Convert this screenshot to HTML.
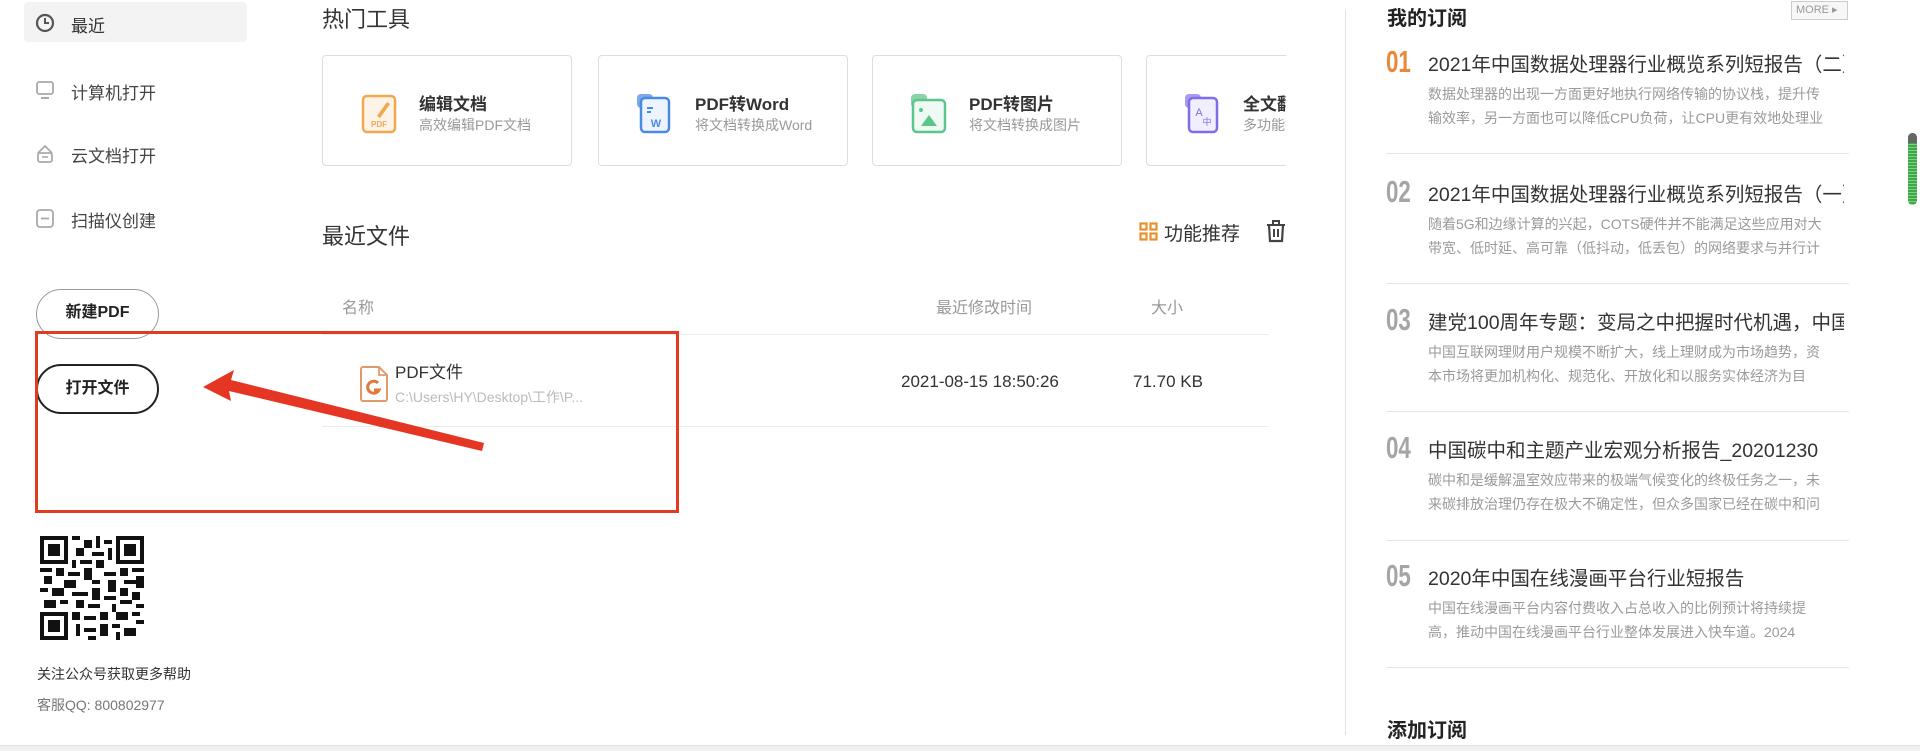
<!DOCTYPE html>
<html><head><meta charset="utf-8"><style>
*{margin:0;padding:0;box-sizing:border-box}
body{width:1920px;height:751px;background:#fff;position:relative;overflow:hidden;font-family:"Liberation Sans","Noto Sans CJK SC",sans-serif;color:#333}
.a{position:absolute;white-space:nowrap}
.nav{font-size:17px;color:#444}
.card{position:absolute;top:55px;width:250px;height:111px;border:1px solid #dedede;border-radius:4px;background:#fff}
.ct{position:absolute;left:96px;top:34px;font-size:17px;font-weight:bold;color:#333}
.cs{position:absolute;left:96px;top:59px;font-size:14px;color:#999}
.btn{position:absolute;left:36px;width:123px;height:50px;border-radius:25px;font-size:16px;font-weight:bold;text-align:center;line-height:46px;color:#222}
.num{position:absolute;left:1386px;font-size:31px;font-family:"Liberation Sans Narrow","Liberation Sans",sans-serif;font-weight:bold;color:#a5a5a5;transform:scaleX(.72);transform-origin:left;line-height:34px}
.tt{position:absolute;left:1428px;width:416px;overflow:hidden;font-size:19.5px;color:#333;white-space:nowrap}
.ds{position:absolute;left:1428px;width:421px;overflow:hidden;font-size:14px;color:#9a9a9a;line-height:24px;white-space:nowrap}
.sep{position:absolute;left:1386px;width:463px;height:1px;background:#e6e6e6}
</style></head><body>

<div class="a" style="left:24px;top:2px;width:223px;height:40px;background:#f3f3f3;border-radius:4px"></div>
<svg class="a" style="left:35px;top:13px" width="20" height="20" viewBox="0 0 20 20"><circle cx="10" cy="10" r="8" fill="none" stroke="#555" stroke-width="2.2"/><path d="M10 5v5h4" fill="none" stroke="#555" stroke-width="2"/></svg>
<div class="a nav" style="left:71px;top:12px;color:#333">最近</div>
<svg class="a" style="left:35px;top:80px" width="20" height="20" viewBox="0 0 20 20"><rect x="2" y="2" width="16" height="12" rx="2" fill="none" stroke="#aaa" stroke-width="1.8"/><path d="M6 18h8" stroke="#aaa" stroke-width="2"/></svg>
<div class="a nav" style="left:71px;top:79px">计算机打开</div>
<svg class="a" style="left:35px;top:143px" width="20" height="22" viewBox="0 0 20 22"><path d="M3 10L10 3l7 7" fill="none" stroke="#aaa" stroke-width="1.8"/><rect x="3" y="10" width="14" height="9" rx="2" fill="none" stroke="#aaa" stroke-width="1.8"/><path d="M7 14h6" stroke="#aaa" stroke-width="1.6"/></svg>
<div class="a nav" style="left:71px;top:142px">云文档打开</div>
<svg class="a" style="left:35px;top:208px" width="20" height="22" viewBox="0 0 20 22"><rect x="2" y="2" width="16" height="17" rx="3" fill="none" stroke="#aaa" stroke-width="1.8"/><path d="M6 10.5h8" stroke="#aaa" stroke-width="1.8"/></svg>
<div class="a nav" style="left:71px;top:207px">扫描仪创建</div>

<div class="btn" style="top:289px;border:1.5px solid #999">新建PDF</div>
<div class="btn" style="top:364px;border:2px solid #222">打开文件</div>

<svg class="a" style="left:40px;top:536px" width="104" height="104" viewBox="0 0 26 26" shape-rendering="crispEdges">
<rect width="26" height="26" fill="#fff"/>
<g fill="#111"><path d="M0 0h7v7H0zM19 0h7v7h-7zM0 19h7v7H0z"/></g>
<g fill="#fff"><path d="M1 1h5v5H1zM20 1h5v5h-5zM1 20h5v5H1z"/></g>
<g fill="#111"><path d="M2 2h3v3H2zM21 2h3v3h-3zM2 21h3v3H2z"/>
<path d="M8 0h2v1H8zM11 1h2v2h-2zM14 0h1v3h-1zM16 1h2v1h-2zM9 3h2v2H9zM13 4h3v1h-3zM17 3h1v3h-1zM8 6h1v2H8zM10 6h3v1h-3zM14 6h2v2h-2z
M0 8h3v1H0zM4 8h2v2H4zM7 9h3v1H7zM11 8h2v3h-2zM16 9h3v1h-3zM20 8h2v2h-2zM23 8h3v1h-3zM1 10h2v2H1zM6 11h3v2H6zM13 11h2v1h-2zM17 11h2v3h-2zM21 11h3v1h-3zM24 10h2v3h-2z
M0 13h2v1H0zM3 13h3v2H3zM8 14h4v1H8zM13 13h2v3h-2zM16 15h3v1h-3zM20 13h2v2h-2zM23 14h2v2h-2zM1 16h3v2H1zM5 16h2v1H5zM9 16h2v2H9zM12 17h3v1h-3zM18 17h1v2h-1zM20 16h3v1h-3zM24 17h2v1h-2z
M8 19h2v2H8zM11 20h3v1h-3zM15 19h2v2h-2zM19 19h3v2h-3zM23 19h2v1h-2zM9 22h1v3H9zM11 23h3v1h-3zM15 22h2v3h-2zM18 22h2v1h-2zM21 23h3v2h-3zM24 21h2v1h-2zM12 25h2v1h-2zM19 24h1v2h-1z"/></g>
</svg>
<div class="a" style="left:37px;top:664px;font-size:14px;color:#333">关注公众号获取更多帮助</div>
<div class="a" style="left:37px;top:695px;font-size:14px;color:#777">客服QQ: 800802977</div>

<div class="a" style="left:322px;top:2px;font-size:22px;color:#333">热门工具</div>
<div style="position:absolute;left:322px;top:0;width:964px;height:180px;overflow:hidden">
<div class="card" style="left:0">
 <svg class="a" style="left:38px;top:36px" width="38" height="42" viewBox="0 0 38 42"><rect x="2" y="4" width="32" height="36" rx="4" fill="#fdf3e6" stroke="#f1a84f" stroke-width="2.5"/><path d="M16 24l10-14 3 2-10 14z" fill="#f1a84f"/><text x="18" y="35" font-size="8" font-weight="bold" fill="#f1a84f" text-anchor="middle" font-family="Liberation Sans">PDF</text></svg>
 <div class="ct">编辑文档</div><div class="cs">高效编辑PDF文档</div></div>
<div class="card" style="left:276px">
 <svg class="a" style="left:36px;top:36px" width="40" height="44" viewBox="0 0 40 44"><rect x="2" y="2" width="16" height="14" rx="4" fill="#7aa9ec"/><rect x="6" y="6" width="28" height="34" rx="4" fill="#eef4fd" stroke="#4a8ae6" stroke-width="2.5"/><path d="M12 16h6M12 20h4" stroke="#4a8ae6" stroke-width="2"/><text x="21" y="35" font-size="11" font-weight="bold" fill="#4a8ae6" text-anchor="middle" font-family="Liberation Sans">W</text></svg>
 <div class="ct">PDF转Word</div><div class="cs">将文档转换成Word</div></div>
<div class="card" style="left:550px">
 <svg class="a" style="left:36px;top:36px" width="40" height="44" viewBox="0 0 40 44"><rect x="2" y="2" width="16" height="14" rx="4" fill="#8ad3a8"/><rect x="4" y="8" width="32" height="32" rx="4" fill="#eefaf3" stroke="#5cc68a" stroke-width="2.5"/><circle cx="12" cy="18" r="2" fill="#5cc68a"/><path d="M12 34l8-11 8 11z" fill="#5cc68a"/></svg>
 <div class="ct">PDF转图片</div><div class="cs">将文档转换成图片</div></div>
<div class="card" style="left:824px">
 <svg class="a" style="left:36px;top:36px" width="40" height="44" viewBox="0 0 40 44"><rect x="2" y="2" width="16" height="14" rx="4" fill="#a69bef"/><rect x="6" y="6" width="28" height="34" rx="4" fill="#f1effd" stroke="#7c6ee6" stroke-width="2.5"/><text x="16" y="24" font-size="11" fill="#7c6ee6" text-anchor="middle" font-family="Liberation Sans">A</text><text x="24" y="33" font-size="9" fill="#7c6ee6" text-anchor="middle" font-family="Noto Sans CJK SC">中</text></svg>
 <div class="ct">全文翻译</div><div class="cs">多功能翻译</div></div>
</div>

<div class="a" style="left:322px;top:219px;font-size:22px;color:#333">最近文件</div>
<svg class="a" style="left:1139px;top:222px" width="19" height="19" viewBox="0 0 19 19"><g fill="none" stroke="#e8902e" stroke-width="2.2"><rect x="1.5" y="1.5" width="6" height="6"/><rect x="11.5" y="1.5" width="6" height="6"/><rect x="1.5" y="11.5" width="6" height="6"/><rect x="11.5" y="11.5" width="6" height="6"/></g></svg>
<div class="a" style="left:1164px;top:219px;font-size:19px;color:#333">功能推荐</div>
<svg class="a" style="left:1265px;top:219px" width="22" height="24" viewBox="0 0 22 24"><path d="M2 6h18M8 6V2h6v4" fill="none" stroke="#444" stroke-width="2"/><path d="M4 6l1 16h12l1-16" fill="none" stroke="#444" stroke-width="2.2"/><path d="M9 10v8M13 10v8" stroke="#444" stroke-width="2"/></svg>

<div class="a" style="left:342px;top:294px;font-size:16px;color:#999">名称</div>
<div class="a" style="left:936px;top:294px;font-size:16px;color:#999">最近修改时间</div>
<div class="a" style="left:1151px;top:294px;font-size:16px;color:#999">大小</div>
<div class="a" style="left:322px;top:334px;width:947px;height:1px;background:#ececec"></div>

<svg class="a" style="left:359px;top:365px" width="30" height="38" viewBox="0 0 30 38"><path d="M2 4a2 2 0 0 1 2-2h16l8 8v24a2 2 0 0 1-2 2H4a2 2 0 0 1-2-2z" fill="#fff" stroke="#e09a6a" stroke-width="2"/><path d="M20 2v8h8" fill="none" stroke="#e09a6a" stroke-width="1.8"/><path d="M19 18a6 6 0 1 0 1 7h-5" fill="none" stroke="#e07a3a" stroke-width="3"/></svg>
<div class="a" style="left:395px;top:358px;font-size:17px;color:#333">PDF文件</div>
<div class="a" style="left:395px;top:387px;font-size:14px;color:#bbb">C:\Users\HY\Desktop\工作\P...</div>
<div class="a" style="left:901px;top:372px;font-size:17px;color:#333">2021-08-15 18:50:26</div>
<div class="a" style="left:1133px;top:372px;font-size:17px;color:#333">71.70 KB</div>
<div class="a" style="left:322px;top:426px;width:947px;height:1px;background:#ececec"></div>

<div class="a" style="left:35px;top:331px;width:644px;height:182px;border:3px solid #e33a22"></div>
<svg class="a" style="left:0;top:0" width="700" height="500"><polygon points="203,387 234,370 231,380 484,443 482,451 229,391 231,401" fill="#e53523"/></svg>

<div class="a" style="left:1345px;top:10px;width:1px;height:725px;background:#e2e2e2"></div>
<div class="a" style="left:1387px;top:2px;font-size:20px;font-weight:bold;color:#222">我的订阅</div>
<div class="a" style="left:1791px;top:1px;width:57px;height:19px;border:1px solid #ccc;background:#f7f7f7;font-size:11px;color:#999;line-height:17px;padding-left:4px">MORE ▸</div>

<div class="num" style="top:45px;color:#e8893a">01</div>
<div class="tt" style="top:48px">2021年中国数据处理器行业概览系列短报告（二）</div>
<div class="ds" style="top:82px">数据处理器的出现一方面更好地执行网络传输的协议栈，提升传<br>输效率，另一方面也可以降低CPU负荷，让CPU更有效地处理业</div>
<div class="sep" style="top:153px"></div>

<div class="num" style="top:175px">02</div>
<div class="tt" style="top:178px">2021年中国数据处理器行业概览系列短报告（一）</div>
<div class="ds" style="top:212px">随着5G和边缘计算的兴起，COTS硬件并不能满足这些应用对大<br>带宽、低时延、高可靠（低抖动，低丢包）的网络要求与并行计</div>
<div class="sep" style="top:283px"></div>

<div class="num" style="top:303px">03</div>
<div class="tt" style="top:306px">建党100周年专题：变局之中把握时代机遇，中国</div>
<div class="ds" style="top:340px">中国互联网理财用户规模不断扩大，线上理财成为市场趋势，资<br>本市场将更加机构化、规范化、开放化和以服务实体经济为目</div>
<div class="sep" style="top:411px"></div>

<div class="num" style="top:431px">04</div>
<div class="tt" style="top:434px">中国碳中和主题产业宏观分析报告_20201230</div>
<div class="ds" style="top:468px">碳中和是缓解温室效应带来的极端气候变化的终极任务之一，未<br>来碳排放治理仍存在极大不确定性，但众多国家已经在碳中和问</div>
<div class="sep" style="top:540px"></div>

<div class="num" style="top:559px">05</div>
<div class="tt" style="top:562px">2020年中国在线漫画平台行业短报告</div>
<div class="ds" style="top:596px">中国在线漫画平台内容付费收入占总收入的比例预计将持续提<br>高，推动中国在线漫画平台行业整体发展进入快车道。2024</div>
<div class="sep" style="top:667px"></div>

<div class="a" style="left:1387px;top:714px;font-size:20px;font-weight:bold;color:#222">添加订阅</div>

<div class="a" style="left:1908px;top:133px;width:9px;height:72px;border-radius:5px;background:repeating-linear-gradient(#3ba84a 0 2px,#7fd07f 2px 3px)"></div>
<div class="a" style="left:1908px;top:133px;width:9px;height:10px;border-radius:5px 5px 0 0;background:#666"></div>

<div class="a" style="left:0;top:745px;width:1920px;height:6px;background:#f0f0f0;border-top:1px solid #e0e0e0"></div>
</body></html>
